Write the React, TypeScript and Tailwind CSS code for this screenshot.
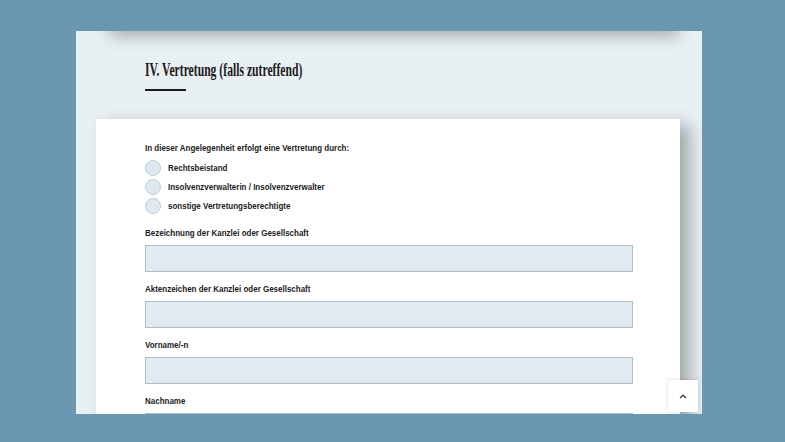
import React from "react";

const labelCls =
  "inline-block origin-left scale-x-[0.84] whitespace-nowrap text-[9.5px] font-bold text-[#1b1b1b] [font-family:'Liberation_Sans',Arial,sans-serif]";

const Field = ({ label }: { label: string }) => (
  <div className="flex flex-col">
    <span className={labelCls + " h-[12px] leading-[12px]"}>{label}</span>
    <div className="mt-[6px] h-[27px] w-[488px] border border-[#b3bcc3] bg-[#dfeaf1]" />
  </div>
);

const Radio = ({ label }: { label: string }) => (
  <div className="flex h-[19px] items-center">
    <span className="h-[16px] w-[16px] shrink-0 rounded-full border border-[#c4ccd2] bg-[#dde8f1]" />
    <span className={labelCls + " ml-[7px] leading-[12px]"}>{label}</span>
  </div>
);

export default function App() {
  return (
    <div className="h-[442px] w-[785px] overflow-hidden bg-[#6a96b0] pl-[76px] pt-[31px]">
      <div className="relative h-[383px] w-[626px] overflow-hidden bg-[#e9f0f4]">
        {/* sticky header shadow falling over the section */}
        <div className="absolute -top-[24px] left-[34px] right-[24px] h-[24px] bg-[#e9f0f4] shadow-[0_5px_16px_rgba(0,0,0,0.3)]" />

        <div className="pl-[69px] pt-[27px]">
          <h2 className="inline-block origin-left scale-x-[0.63] whitespace-nowrap text-[18.5px] font-bold leading-[24px] text-[#1a1a1a] [font-family:'Liberation_Serif','Times_New_Roman',serif]">
            IV. Vertretung (falls zutreffend)
          </h2>
          <div className="mt-[7px] h-[2px] w-[41px] bg-[#1a1a1a]" />
        </div>

        <div className="ml-[20px] mt-[28px] h-[300px] w-[584px] bg-white pl-[49px] pt-[14px] shadow-[10px_6px_16px_rgba(0,0,0,0.3)]">
          <span className={labelCls + " h-[12px] leading-[12px]"}>
            In dieser Angelegenheit erfolgt eine Vertretung durch:
          </span>
          <div className="mt-[1px] flex flex-col">
            <Radio label="Rechtsbeistand" />
            <Radio label="Insolvenzverwalterin / Insolvenzverwalter" />
            <Radio label="sonstige Vertretungsberechtigte" />
          </div>
          <div className="mt-[12px] flex flex-col gap-[11px]">
            <Field label="Bezeichnung der Kanzlei oder Gesellschaft" />
            <Field label="Aktenzeichen der Kanzlei oder Gesellschaft" />
            <Field label="Vorname/-n" />
            <Field label="Nachname" />
          </div>
        </div>

        <button className="absolute left-[592px] top-[349px] flex h-[32px] w-[30px] items-center justify-center bg-white shadow-[0_0_4px_rgba(0,0,0,0.15)]">
          <svg width="8" height="5" viewBox="0 0 8 5" fill="none">
            <path d="M1 4 L4 1 L7 4" stroke="#333" strokeWidth="1.2" />
          </svg>
        </button>
      </div>
    </div>
  );
}
